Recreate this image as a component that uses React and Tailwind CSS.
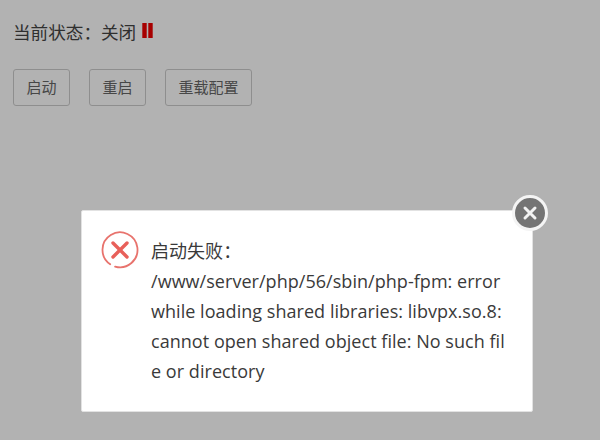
export default function App() {
  return (
    <div className="relative h-[440px] w-[600px] overflow-hidden bg-white font-['Open_Sans','Noto_Sans_CJK_SC',sans-serif] text-[#333]">
      <div className="flex flex-col gap-[21px] px-[13px] pt-[19px]">
        <div className="flex h-[26px] items-center text-[17.6px] leading-[26px] text-[#444]">
          <span>当前状态：关闭</span>
          <svg className="ml-[6px] -mt-[3px]" width="11" height="15" viewBox="0 0 11 15">
            <rect x="0.3" y="0" width="4.4" height="15" fill="#f00000" />
            <rect x="6.3" y="0" width="4.4" height="15" fill="#f00000" />
          </svg>
        </div>
        <div className="flex gap-[19px] pt-[3px]">
          <button className="h-[37px] w-[57px] rounded-[3px] border border-[#ccc] text-[15px] text-[#666]">启动</button>
          <button className="h-[37px] w-[57px] rounded-[3px] border border-[#ccc] text-[15px] text-[#666]">重启</button>
          <button className="h-[37px] w-[87px] rounded-[3px] border border-[#ccc] text-[15px] text-[#666]">重载配置</button>
        </div>
      </div>
      <div className="absolute inset-0 bg-black/30" />
      <div className="absolute left-[81px] top-[210px] w-[452px] rounded-[2px] border border-[#e2e2e2] bg-white pb-[25px] pl-[69px] pr-[25px] pt-[25px] text-[18px] leading-[30px] tracking-[0.04px] text-[#3a3a3a]">
        <svg className="absolute left-[18px] top-[19px]" width="40" height="40" viewBox="0 0 40 40" fill="none">
          <path d="M10.2 34.3 A17.5 17.5 0 1 1 15.1 36.6" stroke="#e8736d" strokeWidth="1.8" strokeLinecap="round" />
          <path d="M13 13 L27 27 M27 13 L13 27" stroke="#e8605a" strokeWidth="3.4" strokeLinecap="round" />
        </svg>
        <div className="break-all">
          启动失败：
          <br />
          /www/server/php/56/sbin/php-fpm: error while loading shared libraries: libvpx.so.8: cannot open shared object file: No such file or directory
        </div>
      </div>
      <div className="absolute left-[512px] top-[195px] flex h-[36px] w-[36px] items-center justify-center rounded-full border-[3px] border-[#f4f4f4] bg-[#747474]">
        <svg width="16" height="16" viewBox="0 0 16 16" fill="none">
          <path d="M3 3 L13 13 M13 3 L3 13" stroke="#f2f2f2" strokeWidth="3" strokeLinecap="round" />
        </svg>
      </div>
    </div>
  );
}
